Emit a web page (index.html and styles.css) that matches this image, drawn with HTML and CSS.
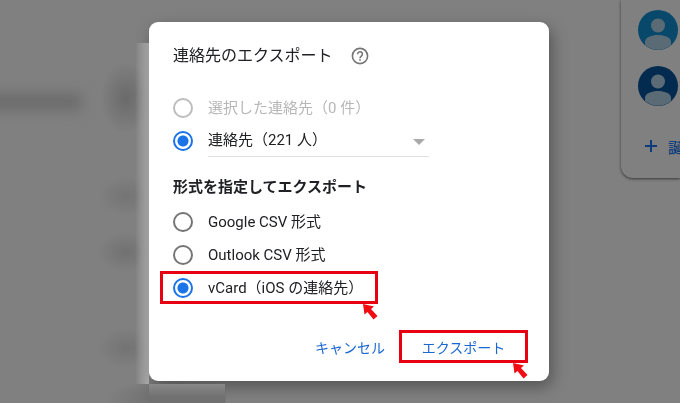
FILE: index.html
```
<!DOCTYPE html>
<html lang="ja">
<head>
    <meta charset="UTF-8">
    <meta name="viewport" content="width=device-width, initial-scale=1.0">
    <title>連絡先のエクスポート</title>
    <link rel="stylesheet" href="styles.css">
</head>
<body>
    <div class="page">
        <div class="contacts">
            <div class="blur-line"></div>
            <div class="blur-spots"></div>
            <div class="glow-left"></div>
            <div class="glow-bottom"></div>
        </div>
        <aside class="side-card">
            <svg class="avatar" viewBox="0 0 40 40">
                <circle cx="20" cy="20" r="20" fill="#08486a"/>
                <circle cx="20" cy="15.500" r="7" fill="#5b6b76"/>
                <path d="M7 35v-3c0-5 7-7 13-7s13 2 13 7v3a20 20 0 0 1-26 0z" fill="#5b6b76"/>
            </svg>
            <svg class="avatar" viewBox="0 0 40 40">
                <circle cx="20" cy="20" r="20" fill="#032b50"/>
                <circle cx="20" cy="15.500" r="7" fill="#5b6b76"/>
                <path d="M7 35v-3c0-5 7-7 13-7s13 2 13 7v3a20 20 0 0 1-26 0z" fill="#5b6b76"/>
            </svg>
            <a class="add-link" href="#">
                <svg width="14" height="14" viewBox="0 0 14 14"><path d="M7 1v12M1 7h12" stroke="currentColor" stroke-width="2"/></svg>
                <span>誕</span>
            </a>
        </aside>
    </div>

    <div class="overlay">
        <form class="dialog" role="dialog" aria-labelledby="title">
            <div class="title-row">
                <h1 id="title">連絡先のエクスポート</h1>
                <button type="button" class="help" aria-label="ヘルプ">
                    <svg width="18" height="18" viewBox="0 0 18 18" fill="none" stroke="currentColor">
                        <circle cx="9" cy="9" r="7.6" stroke-width="1.6"/>
                        <path d="M6.6 7.2a2.4 2.4 0 1 1 3.7 2c-.9.6-1.3 1-1.3 2" stroke-width="1.6"/>
                        <path d="M9 12.2v1.6" stroke-width="1.7"/>
                    </svg>
                </button>
            </div>

            <div class="options">
                <label class="option disabled">
                    <input type="radio" name="source" value="selected" disabled>
                    <span>選択した連絡先（0 件）</span>
                </label>
                <div class="option">
                    <input type="radio" id="all" name="source" value="all" aria-label="連絡先" checked>
                    <div class="select-box">
                        <select aria-label="連絡先">
                            <option>連絡先（221 人）</option>
                        </select>
                        <span class="caret"></span>
                    </div>
                </div>
            </div>

            <h2>形式を指定してエクスポート</h2>
            <div class="options">
                <label class="option">
                    <input type="radio" name="format" value="google">
                    <span>Google CSV 形式</span>
                </label>
                <label class="option">
                    <input type="radio" name="format" value="outlook">
                    <span>Outlook CSV 形式</span>
                </label>
                <label class="option marked">
                    <input type="radio" name="format" value="vcard" checked>
                    <span>vCard（iOS の連絡先）</span>
                    <svg class="arrow" viewBox="0 0 15 16"><path d="M0 0l11 2.500-3 2.500 6.500 7-4 3.500-6-7.500-3 2.500z" fill="#f00c12"/></svg>
                </label>
            </div>

            <div class="actions">
                <button type="button" class="btn">キャンセル</button>
                <button type="submit" class="btn export">エクスポート
                    <svg class="arrow" viewBox="0 0 15 16"><path d="M0 0l11 2.500-3 2.500 6.500 7-4 3.500-6-7.500-3 2.500z" fill="#f00c12"/></svg>
                </button>
            </div>
        </form>
    </div>
</body>
</html>
```
FILE: styles.css
```
* {
    box-sizing: border-box;
}
body {
    margin: 0;
    font-family: Roboto, "Noto Sans CJK JP", sans-serif;
    background-color: #808080;
    color: #202124;
}
.page {
    display: flex;
    align-items: flex-start;
    height: 100vh;
    overflow: hidden;
}

/* blurred contact list behind the dialog */
.contacts {
    position: relative;
    flex: 1;
    height: 100%;
}
.blur-line {
    position: absolute;
    left: -20px;
    top: 94px;
    width: 102px;
    height: 16px;
    background-color: #6a6a6a;
    filter: blur(7px);
}
.blur-spots {
    position: absolute;
    left: 96px;
    top: 43px;
    width: 130px;
    bottom: 0;
    background:
        radial-gradient(26px 36px at 30px 55px, #6a6a6a, transparent),
        radial-gradient(28px 20px at 30px 153px, #747474, transparent),
        radial-gradient(28px 20px at 30px 209px, #717171, transparent),
        radial-gradient(28px 20px at 30px 305px, #737373, transparent),
        radial-gradient(70px 20px at 80px 356px, #686868, transparent);
}
.glow-left {
    position: absolute;
    left: 135px;
    top: 43px;
    width: 14px;
    height: 341px;
    background: linear-gradient(to right, transparent, #b4b4b4);
}
.glow-bottom {
    position: absolute;
    z-index: 2;
    left: 149px;
    top: 384px;
    width: 76px;
    height: 19px;
    background: linear-gradient(#898989, #707070 70%);
}

.side-card {
    flex: 0 0 59px;
    min-width: 0;
    display: flex;
    flex-direction: column;
    gap: 16px;
    height: 178px;
    padding: 10px 0 0 17px;
    border-radius: 0 0 0 12px;
    background-color: #808080;
    box-shadow: 0 1px 3px rgba(0, 0, 0, 0.6);
}
.avatar {
    flex: none;
    width: 40px;
    height: 40px;
}
.add-link {
    display: flex;
    align-items: center;
    gap: 10px;
    height: 24px;
    margin: 12px 0 0 6px;
    color: #0d3c7c;
    font-size: 15px;
    font-weight: 500;
    text-decoration: none;
}
.add-link svg {
    flex: none;
}

.overlay {
    position: fixed;
    inset: 0;
    display: flex;
    align-items: center;
    justify-content: center;
    padding-left: 18px;
}
.dialog {
    width: 400px;
    padding: 22px 21px 18px 24px;
    border-radius: 9px;
    background-color: #fff;
    box-shadow: 3px 6px 16px rgba(0, 0, 0, 0.35);
}
.title-row {
    display: flex;
    align-items: center;
    gap: 18px;
    height: 24px;
    margin-bottom: 23px;
}
h1 {
    margin: 0;
    font-size: 16px;
    font-weight: 400;
    line-height: 24px;
}
.help {
    display: flex;
    padding: 0;
    border: none;
    background: none;
    color: #757575;
}
h2 {
    margin: 18px 0 6px;
    font-size: 15px;
    font-weight: 700;
    line-height: 24px;
}
.options {
    display: flex;
    flex-direction: column;
    align-items: flex-start;
}
.option {
    position: relative;
    display: flex;
    align-items: center;
    gap: 15px;
    height: 33px;
    font-size: 15px;
    line-height: 24px;
}
.disabled {
    color: #b7b7b7;
}
input[type="radio"] {
    appearance: none;
    flex: none;
    width: 20px;
    height: 20px;
    margin: 0;
    border: 2px solid #757575;
    border-radius: 50%;
}
input[type="radio"]:disabled {
    border-color: #bdbdbd;
}
input[type="radio"]:checked {
    border-color: #1a73e8;
    background: radial-gradient(circle, #1a73e8 5px, transparent 6px);
}
.select-box {
    display: flex;
    align-items: center;
    width: 221px;
    height: 33px;
    padding-right: 4px;
    border-bottom: 1px solid #e0e0e0;
}
select {
    appearance: none;
    flex: 1;
    padding: 0;
    border: none;
    background: none;
    color: inherit;
    font: inherit;
}
.caret {
    margin-top: 4px;
    border: 6px solid transparent;
    border-top-color: #aaa;
    border-bottom: none;
}

/* red callouts */
.marked::before {
    content: "";
    position: absolute;
    inset: 0 -15px 0 -13px;
    border: 3px solid #e60012;
}
.arrow {
    position: absolute;
    top: 100%;
    right: 0;
    width: 15px;
    height: 16px;
}
.marked .arrow {
    right: -15px;
}
.actions {
    display: flex;
    justify-content: flex-end;
    margin-top: 26px;
}
.btn {
    position: relative;
    height: 33px;
    padding: 0 14px;
    border: none;
    background: none;
    color: #1967d2;
    font-family: inherit;
    font-size: 14px;
}
.export {
    min-width: 129px;
    border: 3px solid #e60012;
}
.export .arrow {
    right: -3px;
    margin-top: 3px;
}
```
